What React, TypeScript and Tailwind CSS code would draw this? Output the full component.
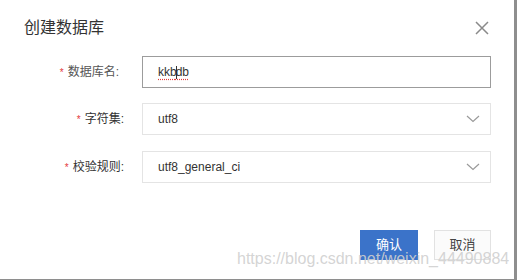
export default function App() {
  const labelFont = { fontFamily: '"Liberation Sans", "Noto Sans CJK SC", sans-serif' }

  const Chevron = () => (
    <svg width="14" height="8" viewBox="0 0 14 8" fill="none">
      <path d="M1 1 L7 6.5 L13 1" stroke="#9a9a9a" strokeWidth="1.2" />
    </svg>
  )

  return (
    <div className="w-[518px] h-[280px] bg-white relative" style={labelFont}>
      <div className="w-[517px] h-[280px] border-r-[3px] border-b border-[#8e8e8e] flex flex-col">
        {/* Header */}
        <div className="flex items-center justify-between pl-[24px] pr-[25px] pt-[18px]">
          <h1 className="text-[16px] leading-[20px] text-[#333]">创建数据库</h1>
          <svg width="14" height="14" viewBox="0 0 14 14" fill="none">
            <path d="M1 1 L13 13 M13 1 L1 13" stroke="#8a8a8a" strokeWidth="1.5" />
          </svg>
        </div>

        {/* Form */}
        <div className="mt-[18px] flex flex-col">
          <div className="flex items-center h-[32px]">
            <label className="w-[124px] pr-[5px] text-right text-[12px] text-[#555]">
              <span className="text-[#e4393c] text-[10px] mr-[4px]">*</span>数据库名:
            </label>
            <div className="ml-[18px] w-[349px] h-[32px] border border-[#9c9c9c] flex items-center pl-[15px] text-[12px] text-[#333]">
              <span className="underline decoration-dotted decoration-[#e03c3c] underline-offset-[3px]">
                kkb<span className="inline-block w-px h-[13px] bg-[#333] align-middle -mx-px" />db
              </span>
            </div>
          </div>

          <div className="flex items-center h-[32px] mt-[15px]">
            <label className="w-[124px] text-right text-[12px] text-[#333]">
              <span className="text-[#e4393c] text-[10px] mr-[4px]">*</span>字符集:
            </label>
            <div className="ml-[18px] w-[349px] h-[32px] border border-[#e4e4e4] flex items-center justify-between pl-[15px] pr-[10px] text-[12px] text-[#333]">
              <span>utf8</span>
              <Chevron />
            </div>
          </div>

          <div className="flex items-center h-[32px] mt-[16px]">
            <label className="w-[124px] text-right text-[12px] text-[#333]">
              <span className="text-[#e4393c] text-[10px] mr-[4px]">*</span>校验规则:
            </label>
            <div className="ml-[18px] w-[349px] h-[32px] border border-[#e4e4e4] flex items-center justify-between pl-[15px] pr-[10px] text-[12px] text-[#333]">
              <span>utf8_general_ci</span>
              <Chevron />
            </div>
          </div>
        </div>

        {/* Footer buttons */}
        <div className="mt-[47px] flex justify-end gap-[16px] pr-[23px]">
          <button className="w-[58px] h-[30px] bg-[#3b73c9] text-white text-[13px]">确认</button>
          <button className="w-[57px] h-[30px] border border-[#e2e2e2] bg-[#fbfbfb] text-[#444] text-[13px]">
            取消
          </button>
        </div>
      </div>

      {/* Watermark */}
      <div className="absolute left-[237px] top-[250px] text-[16px] leading-[18px] text-[#cfcfcf]/90 whitespace-nowrap pointer-events-none">
        https://blog.csdn.net/weixin_44490884
      </div>
    </div>
  )
}
